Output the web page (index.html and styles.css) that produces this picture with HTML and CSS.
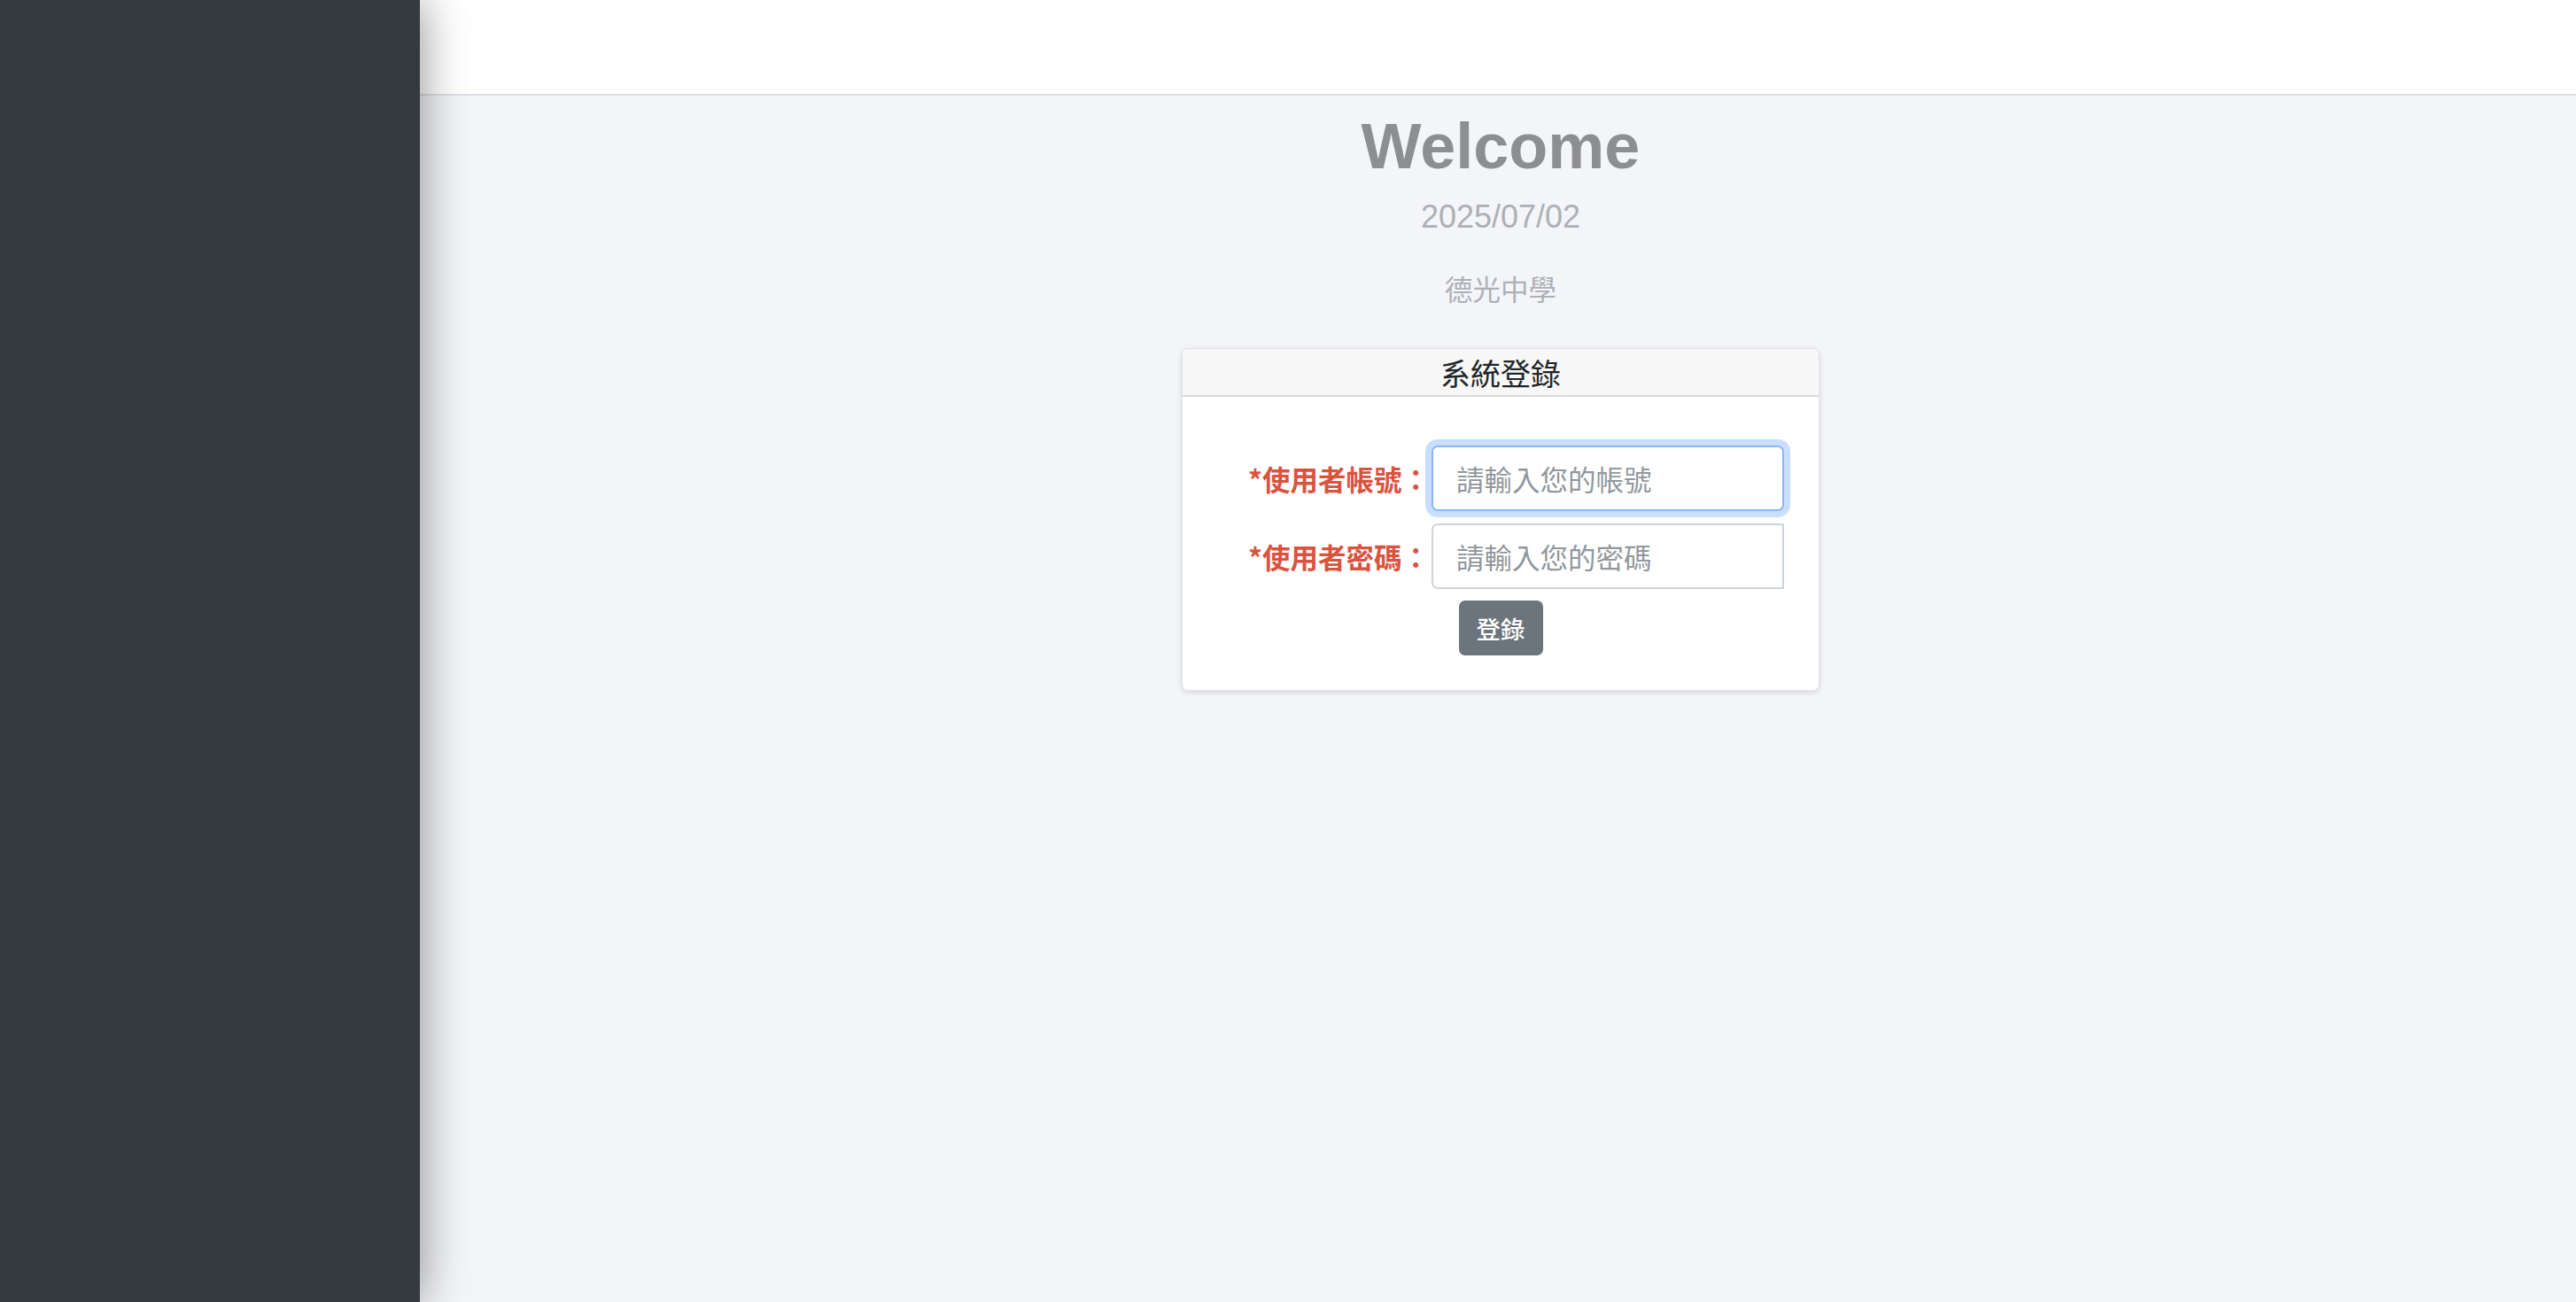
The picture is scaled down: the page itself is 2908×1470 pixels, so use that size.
FILE: index.html
```html
<!DOCTYPE html>
<html lang="zh-Hant">
<head>
    <meta charset="UTF-8">
    <meta name="viewport" content="width=device-width, initial-scale=1.0">
    <title>系統登錄</title>
    <link rel="stylesheet" href="styles.css">
</head>
<body>
    <div class="layout">
        <aside class="sidebar"></aside>
        <div class="main">
            <header class="topbar"></header>
            <div class="content">
                <h1 class="welcome">Welcome</h1>
                <div class="today">2025/07/02</div>
                <div class="school">德光中學</div>

                <div class="login-card">
                    <div class="login-card-header">系統登錄</div>
                    <form class="login-card-body">
                        <div class="form-grid">
                            <label for="account">*使用者帳號：</label>
                            <input type="text" id="account" class="form-input is-focus" placeholder="請輸入您的帳號" autofocus>
                            <label for="password">*使用者密碼：</label>
                            <div class="input-group">
                                <input type="password" id="password" class="form-input" placeholder="請輸入您的密碼">
                            </div>
                        </div>
                        <div class="form-actions">
                            <button type="submit" class="login-btn">登錄</button>
                        </div>
                    </form>
                </div>
            </div>
        </div>
    </div>
</body>
</html>
```

FILE: styles.css
```css
* {
    margin: 0;
    padding: 0;
    box-sizing: border-box;
}

body {
    font-family: "Liberation Sans", "Noto Sans CJK TC", sans-serif;
    color: #212529;
}

.layout {
    display: flex;
    height: 100vh;
}

.sidebar {
    width: 474px;
    flex-shrink: 0;
    background-color: #343a40;
    position: relative;
    z-index: 2;
    box-shadow: 0 0 50px rgba(0, 0, 0, 0.45);
}

.main {
    flex: 1;
    display: flex;
    flex-direction: column;
    background-color: #f4f5f9;
}

.topbar {
    height: 108px;
    flex-shrink: 0;
    background-color: #ffffff;
    border-bottom: 2px solid #dcdfe4;
}

.content {
    display: flex;
    flex-direction: column;
    align-items: center;
    padding-left: 6px;
    text-align: center;
}

.welcome {
    margin-top: 14px;
    font-size: 72px;
    line-height: 1.2;
    font-weight: bold;
    color: #8d8e92;
}

.today {
    margin-top: 15px;
    font-size: 36px;
    line-height: 1.2;
    color: #adb0b5;
}

.school {
    margin-top: 40px;
    font-family: "Noto Sans CJK TC", sans-serif;
    font-size: 31.5px;
    line-height: 1.2;
    color: #adb0b5;
}

/* login card */
.login-card {
    margin-top: 49px;
    width: 720px;
    background-color: #ffffff;
    border: 1px solid #e0e2e5;
    border-radius: 7px;
    box-shadow: 0 2px 6px rgba(0, 0, 0, 0.12);
    overflow: hidden;
}

.login-card-header {
    padding: 6px 0 5px;
    font-family: "Noto Sans CJK TC", sans-serif;
    font-size: 34px;
    line-height: 41px;
    background-color: #f7f7f7;
    border-bottom: 2px solid #d9dadb;
}

.login-card-body {
    padding: 55px 0 39px;
}

.form-grid {
    display: grid;
    grid-template-columns: 1fr 398px;
    column-gap: 2px;
    row-gap: 14px;
    align-items: center;
    padding-right: 39px;
}

.form-grid label {
    text-align: right;
    font-family: "Noto Sans CJK TC", sans-serif;
    font-size: 31.5px;
    font-weight: bold;
    color: #d9533f;
    white-space: nowrap;
}

.form-input {
    display: block;
    width: 100%;
    height: 74px;
    padding: 0 26px;
    font-family: "Noto Sans CJK TC", sans-serif;
    font-size: 31.5px;
    color: #212529;
    background-color: #ffffff;
    border: 2px solid #ced4da;
    border-radius: 7px;
    outline: none;
}

.form-input::placeholder {
    color: #91979d;
}

.form-input.is-focus,
.form-input:focus {
    border-color: #86b7fe;
    box-shadow: 0 0 0 7px rgba(13, 110, 253, 0.22);
}

.input-group .form-input {
    border-radius: 7px 0 0 7px;
}

.form-actions {
    margin-top: 13px;
    text-align: center;
}

.login-btn {
    padding: 10px 20px;
    font-family: "Noto Sans CJK TC", sans-serif;
    font-size: 27.5px;
    font-weight: 500;
    line-height: 42px;
    color: #ffffff;
    background-color: #6c757d;
    border: none;
    border-radius: 7px;
    cursor: pointer;
}

.login-btn:hover {
    background-color: #5c636a;
}
```
